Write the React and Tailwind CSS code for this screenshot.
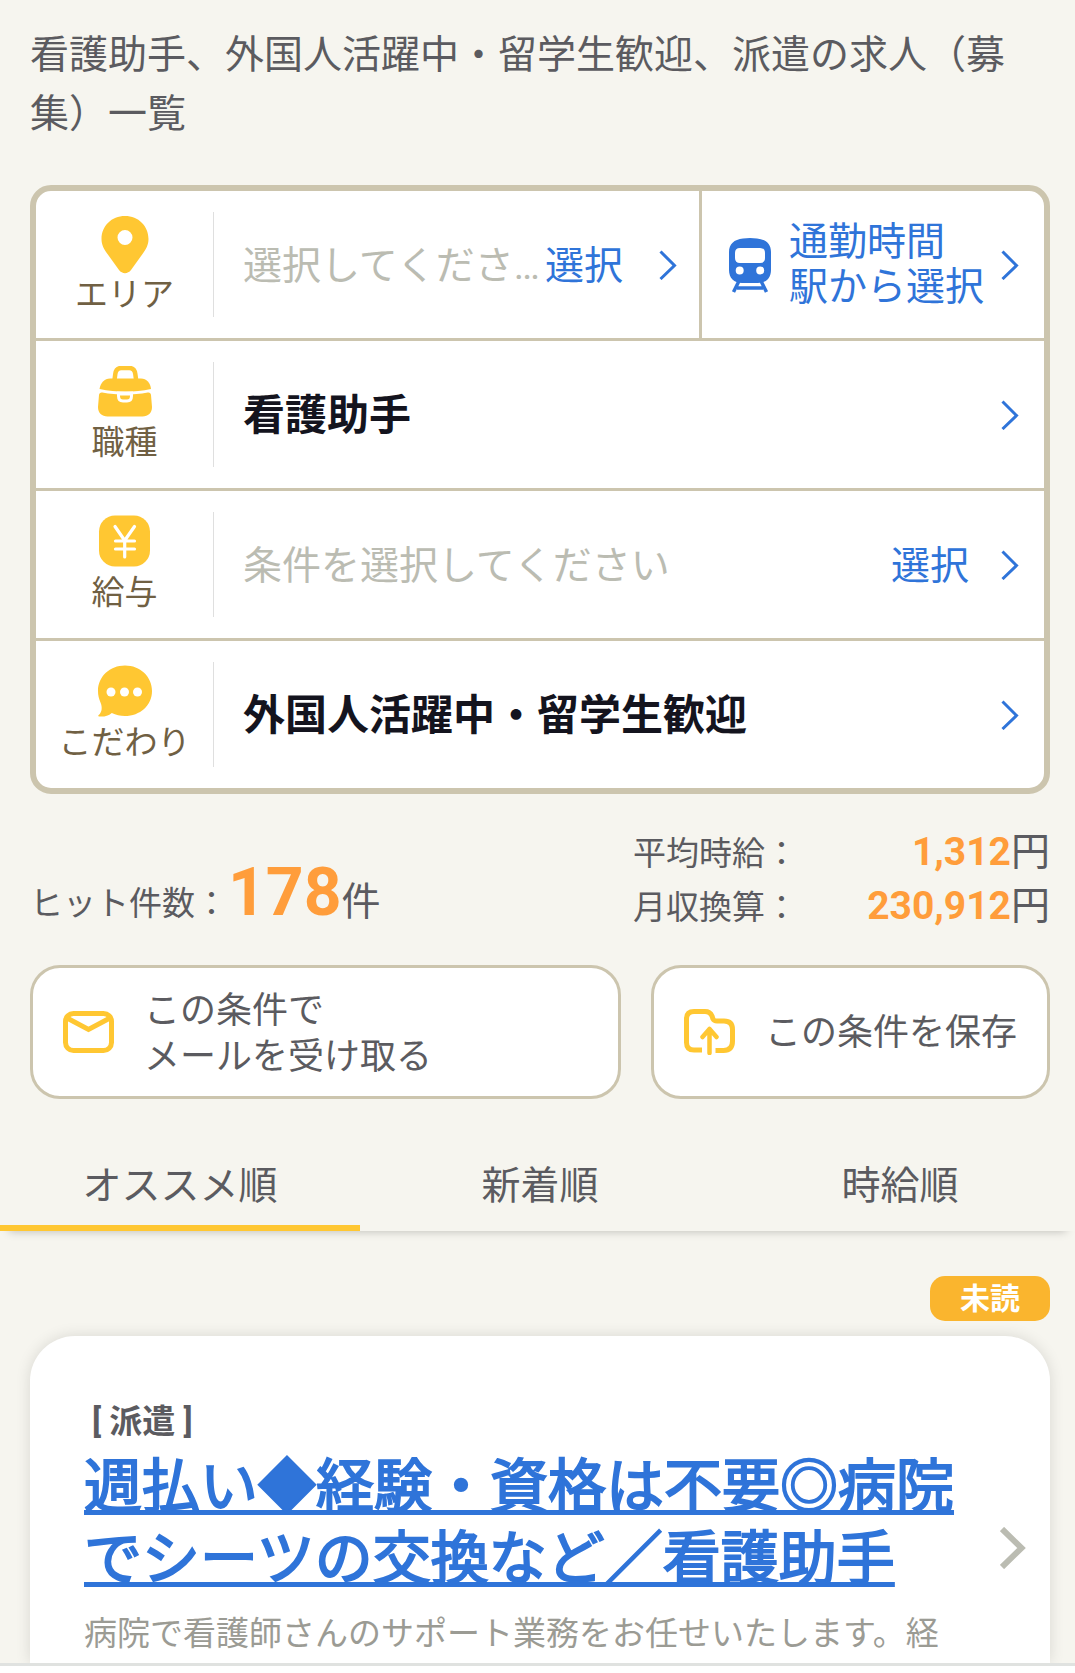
const PinIcon = () => (
	<svg viewBox="0 0 60 60" className="h-[60px] w-[60px]" aria-hidden="true">
		<path
			fill="#ffc732"
			fillRule="evenodd"
			d="M30 1C16.500 1 6.500 11 6.500 24c0 6 2.500 10 6 15l11.500 16c3.200 4.200 8.800 4.200 12 0l11.500-16c3.500-5 6-9 6-15C53.500 11 43.500 1 30 1Zm0 14a7.500 7.500 0 1 1 0 15a7.500 7.500 0 0 1 0-15Z"
		/>
	</svg>
);

const BagIcon = () => (
	<svg viewBox="0 2 60 57" className="h-[57px] w-[60px]" aria-hidden="true">
		<path
			d="M19.500 16l.8-6c.5-4 2.500-6 6-6h8c3.500 0 5.500 2 6 6l.8 6"
			fill="none"
			stroke="#ffc732"
			strokeWidth="4.500"
		/>
		<path
			fill="#ffc732"
			d="M15 14.500h31c5.500 0 9.500 4.500 10 10.500c-17 3.500-34 3.500-51.500 0C5.500 19 9.500 14.500 15 14.500Z"
		/>
		<path
			fill="#ffc732"
			d="M4 31c.2-2 1.500-2.800 3.300-2.500c15 2.700 30.500 2.700 45.500 0c1.800-.3 3 .5 3.200 2.500l1 12c0 6-4 9.500-9.500 9.500h-35C7 52.500 3 49 3 43Z"
		/>
		<path
			d="M23.500 29v3c0 3.500 1.500 5 4.500 5h4c3 0 4.500-1.500 4.500-5v-3Z"
			fill="#ffc732"
			stroke="#fff"
			strokeWidth="3"
		/>
		<path d="M25 30.500h10" stroke="#fff" strokeWidth="2" />
	</svg>
);

const YenIcon = () => (
	<svg viewBox="0 2 60 57" className="h-[57px] w-[60px] overflow-visible" aria-hidden="true">
		<rect x="4" y="1.500" width="51" height="51" rx="16" fill="#ffc732" />
		<path
			d="M20 12.500L29.700 26.500L39.500 12.500M20.500 27h19M20.500 35h19M29.700 27v16"
			fill="none"
			stroke="#fff"
			strokeWidth="3.200"
			strokeLinecap="round"
			strokeLinejoin="round"
		/>
	</svg>
);

const BubbleIcon = () => (
	<svg viewBox="0 2 60 57" className="h-[57px] w-[60px] overflow-visible" aria-hidden="true">
		<path
			fill="#ffc732"
			d="M30 1.500C45 1.500 57 12.500 57 27S45 52 30 52c-5 0-9-1-13.200-3C13 52 9 53 4 52.500c-1-.2-1-1 0-1.700c3-2.800 3.500-7.500 1.500-12.300C3.800 34.500 3 31 3 27C3 12.500 15 1.500 30 1.500Z"
		/>
		<circle cx="16" cy="28" r="4.500" fill="#fff" />
		<circle cx="29.500" cy="28" r="4.500" fill="#fff" />
		<circle cx="42.500" cy="28" r="4.500" fill="#fff" />
	</svg>
);

const TrainIcon = () => (
	<svg viewBox="0 0 42 56" className="h-[56px] w-[42px] shrink-0" aria-hidden="true">
		<path
			fill="#2f74d9"
			fillRule="evenodd"
			d="M14 1.500Q21 .5 28 1.500C37 2.500 42 7 42 15v18c0 8-5 13-13 13H13C5 46 0 41 0 33V15C0 7 5 2.500 14 1.500ZM11 11q-5 0-5 5v5q0 5 5 5h20q5 0 5-5v-5q0-5-5-5ZM10.700 29.500a4 4 0 1 0 0 8a4 4 0 0 0 0-8Zm20.500 0a4 4 0 1 0 0 8a4 4 0 0 0 0-8Z"
		/>
		<path
			d="M10 44L4.500 55M32 44L37.500 55M8 51h26"
			fill="none"
			stroke="#2f74d9"
			strokeWidth="3.500"
		/>
	</svg>
);

const MailIcon = () => (
	<svg viewBox="0 0 51 42" className="h-[42px] w-[51px] shrink-0" aria-hidden="true">
		<rect x="2.500" y="2.500" width="46" height="37" rx="8" fill="none" stroke="#ffc732" strokeWidth="5" />
		<path d="M4 7L25.500 18.500L47 7" fill="none" stroke="#ffc732" strokeWidth="5" />
	</svg>
);

const FolderIcon = () => (
	<svg viewBox="0 0 51 46" className="h-[46px] w-[51px] shrink-0" aria-hidden="true">
		<path
			d="M18 41H10q-7.500 0-7.500-7.500V10q0-7.500 7.500-7.500H21q5 0 7 4.500l1 3q1 2 4 2H40q8.500 0 8.500 8.500V32q0 9.500-9 9.500H31.500"
			fill="none"
			stroke="#ffc732"
			strokeWidth="5"
		/>
		<path
			d="M25.500 20v24M18.500 28l7-8l7 8"
			fill="none"
			stroke="#ffc732"
			strokeWidth="4.500"
			strokeLinecap="round"
			strokeLinejoin="round"
		/>
	</svg>
);

const Chevron = () => (
	<svg viewBox="0 0 18 30" className="h-[30px] w-[18px] shrink-0" aria-hidden="true">
		<path d="M1.500 1.500L15.500 15.500L1.500 29" fill="none" stroke="#2f74d9" strokeWidth="3" />
	</svg>
);

const RowLabel = ({ icon, text }) => (
	<div className="flex h-[105px] w-[178px] shrink-0 flex-col items-center justify-center border-r border-[#dfdfdf]">
		{icon}
		<span className="text-[33px] leading-[40px] text-[#706043]">{text}</span>
	</div>
);

const SearchRow = ({ icon, label, value, placeholder }) => (
	<a
		href="#"
		className="flex h-[150px] items-center border-t-[3px] border-[#ccc5ae] pr-[25px]"
	>
		<RowLabel icon={icon} text={label} />
		{value ? (
			<span className="ml-[29px] flex-1 pt-0.5 text-[42px] font-bold leading-[60px] text-[#14141e]">
				{value}
			</span>
		) : (
			<>
				<span className="ml-[29px] flex-1 pt-1 text-[#bbbcb2]">{placeholder}</span>
				<span className="mr-8 pt-1 text-[#2f74d9]">選択</span>
			</>
		)}
		<Chevron />
	</a>
);

const Stat = ({ label, value }) => (
	<div className="flex items-baseline justify-between leading-[52px]">
		<dt className="text-[33px]">{label}：</dt>
		<dd>
			<b className="text-[#ff9d3b]">{value}</b>円
		</dd>
	</div>
);

const tabs = ["オススメ順", "新着順", "時給順"];

const App = () => {
	return (
		<div className="flex min-h-screen flex-col overflow-x-hidden bg-[#f6f5ef] font-['Roboto','Noto_Sans_CJK_JP',sans-serif] text-[39px] text-[#5b5b60]" lang="ja">
			<main className="flex flex-1 flex-col">
				<div className="pl-[30px] pr-[25px] pt-[26px]">
					<h1 className="leading-[59px]">
						看護助手、外国人活躍中・留学生歓迎、派遣の求人（募集）一覧
					</h1>

					<section className="mt-[41px] rounded-[21px] border-[6px] border-[#ccc5ae] bg-white">
						<div className="flex h-[147px]">
							<a href="#" className="flex min-w-0 flex-1 items-center pr-[22px]">
								<RowLabel icon={<PinIcon />} text="エリア" />
								<span className="ml-[29px] flex-1 truncate pt-1 text-[#bbbcb2]">
									選択してください
								</span>
								<span className="mr-9 shrink-0 pt-1 text-[#2f74d9]">選択</span>
								<Chevron />
							</a>
							<a
								href="#"
								className="flex shrink-0 items-center border-l-[3px] border-[#ccc5ae] pl-[27px] pr-[25px] text-[#2f74d9]"
							>
								<TrainIcon />
								<span className="ml-[18px] mr-[17px] leading-[45px]">
									通勤時間
									<br />
									駅から選択
								</span>
								<Chevron />
							</a>
						</div>
						<SearchRow icon={<BagIcon />} label="職種" value="看護助手" />
						<SearchRow icon={<YenIcon />} label="給与" placeholder="条件を選択してください" />
						<SearchRow icon={<BubbleIcon />} label="こだわり" value="外国人活躍中・留学生歓迎" />
					</section>

					<div className="mt-8 flex items-end justify-between">
						<p className="leading-[60px]">
							<span className="text-[33px]">ヒット件数：</span>
							<b className="text-[66px] text-[#ff9d3b]">178</b>件
						</p>
						<dl className="w-[417px]">
							<Stat label="平均時給" value="1,312" />
							<Stat label="月収換算" value="230,912" />
						</dl>
					</div>

					<div className="mt-[31px] flex gap-[30px] text-[36px] leading-[46px]">
						<button
							type="button"
							className="flex h-[134px] flex-1 items-center gap-[30px] rounded-[30px] border-[3px] border-[#ccc5ae] bg-white px-[30px] text-left"
						>
							<MailIcon />
							<span className="pt-1">
								この条件で
								<br />
								メールを受け取る
							</span>
						</button>
						<button
							type="button"
							className="flex h-[134px] shrink-0 items-center gap-[30px] rounded-[30px] border-[3px] border-[#ccc5ae] bg-white px-[30px]"
						>
							<FolderIcon />
							<span className="pt-0.5">この条件を保存</span>
						</button>
					</div>
				</div>

				<nav className="mt-[42px] shadow-[0_9px_9px_-9px_rgba(0,0,0,0.25)]">
					<div className="-mr-[5px] grid grid-cols-3">
						{tabs.map((tab, i) => (
							<a
								key={tab}
								href="#"
								className={
									i === 0
										? "h-[90px] border-b-[6px] border-[#ffc732] text-center leading-[90px]"
										: "h-[90px] text-center leading-[90px]"
								}
							>
								{tab}
							</a>
						))}
					</div>
				</nav>

				<div className="flex flex-1 flex-col pl-[30px] pr-[25px] pt-[45px]">
					<span className="self-end rounded-[15px] bg-[#fab52e] px-[30px] text-[30px] font-bold leading-[45px] text-white">
						未読
					</span>
					<article className="mt-[15px] flex flex-1 items-center rounded-t-[45px] bg-white pl-[54px] pr-6 shadow-[0_0_15px_rgba(0,0,0,0.12)]">
						<div className="flex-1 self-start pt-[61px]">
							<p className="mb-1 pl-2 text-[33px] font-bold leading-[50px]">[ 派遣 ]</p>
							<h2 className="text-[58px] leading-[72px]">
								<a
									href="#"
									className="text-[#2f74d9] underline decoration-[5px] [-webkit-text-stroke:2px_#2f74d9] [text-decoration-skip-ink:none]"
								>
									週払い◆経験・資格は不要◎病院でシーツの交換など／看護助手
								</a>
							</h2>
							<p className="mt-4 text-[33px] leading-[46px] text-[#9b9b94]">
								病院で看護師さんのサポート業務をお任せいたします。経
							</p>
						</div>
						<svg viewBox="0 0 26 42" className="ml-[46px] mt-[96px] h-[42px] w-[26px] shrink-0" aria-hidden="true">
							<path d="M2 2L21.500 21L2 40" fill="none" stroke="#bbbcb2" strokeWidth="6" />
						</svg>
					</article>
				</div>
			</main>
			<footer className="sticky bottom-0 h-[10px] border-t-[3px] border-[#e0e2e0] bg-white" />
		</div>
	);
};

export default App;
